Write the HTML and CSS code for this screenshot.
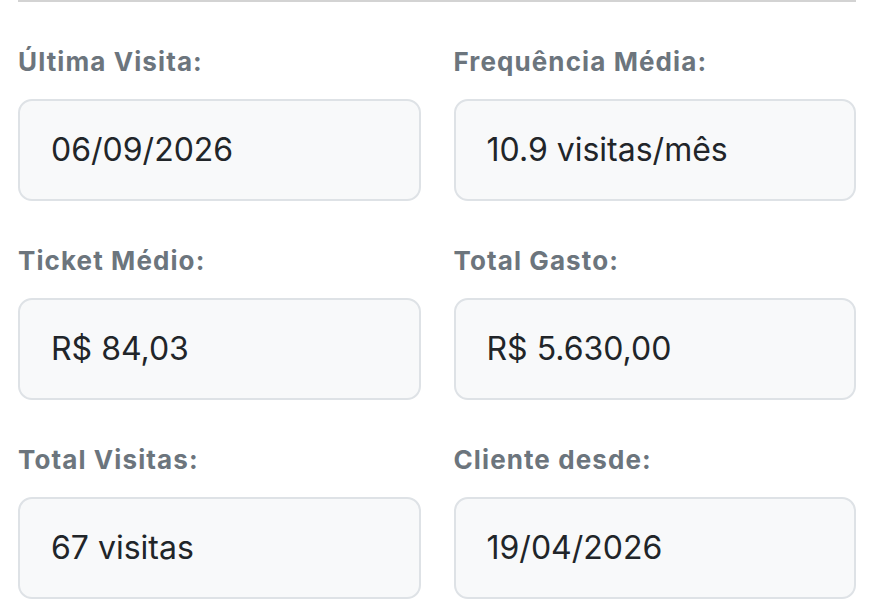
FILE: index.html
```html
<!DOCTYPE html>
<html lang="pt-BR">
<head>
    <meta charset="UTF-8">
    <meta name="viewport" content="width=device-width, initial-scale=1.0">
    <title>Detalhes do Cliente</title>
    <link rel="stylesheet" href="styles.css">
</head>
<body>

    <div class="cliente-info">
        <div class="campo">
            <label>Última Visita:</label>
            <div class="valor">06/09/2026</div>
        </div>
        <div class="campo">
            <label>Frequência Média:</label>
            <div class="valor">10.9 visitas/mês</div>
        </div>
        <div class="campo">
            <label>Ticket Médio:</label>
            <div class="valor">R$ 84,03</div>
        </div>
        <div class="campo">
            <label>Total Gasto:</label>
            <div class="valor">R$ 5.630,00</div>
        </div>
        <div class="campo">
            <label>Total Visitas:</label>
            <div class="valor">67 visitas</div>
        </div>
        <div class="campo">
            <label>Cliente desde:</label>
            <div class="valor">19/04/2026</div>
        </div>
    </div>

</body>
</html>
```

FILE: styles.css
```css
body {
    margin: 0;
    background-color: white;
    font-family: 'Inter', 'Noto Sans', sans-serif;
    padding: 0 16px 0 18px;
}

.cliente-info {
    border-top: 2px solid #d3d3d3; /* linha separadora do topo */
    display: grid;
    grid-template-columns: 1fr 1fr;
    column-gap: 33px;
    row-gap: 40px;
    padding-top: 40px;
}

.campo label {
    display: block;
    font-size: 26px;
    line-height: 39px;
    font-weight: 700;
    letter-spacing: 1.1px;
    color: #6c757d;
    margin-bottom: 18px;
}

.valor {
    background-color: #f8f9fa;
    border: 2px solid #dee2e6;
    border-radius: 14px;
    padding: 25px 31px;
    font-size: 32px;
    line-height: 48px;
    color: #212529;
}
```
